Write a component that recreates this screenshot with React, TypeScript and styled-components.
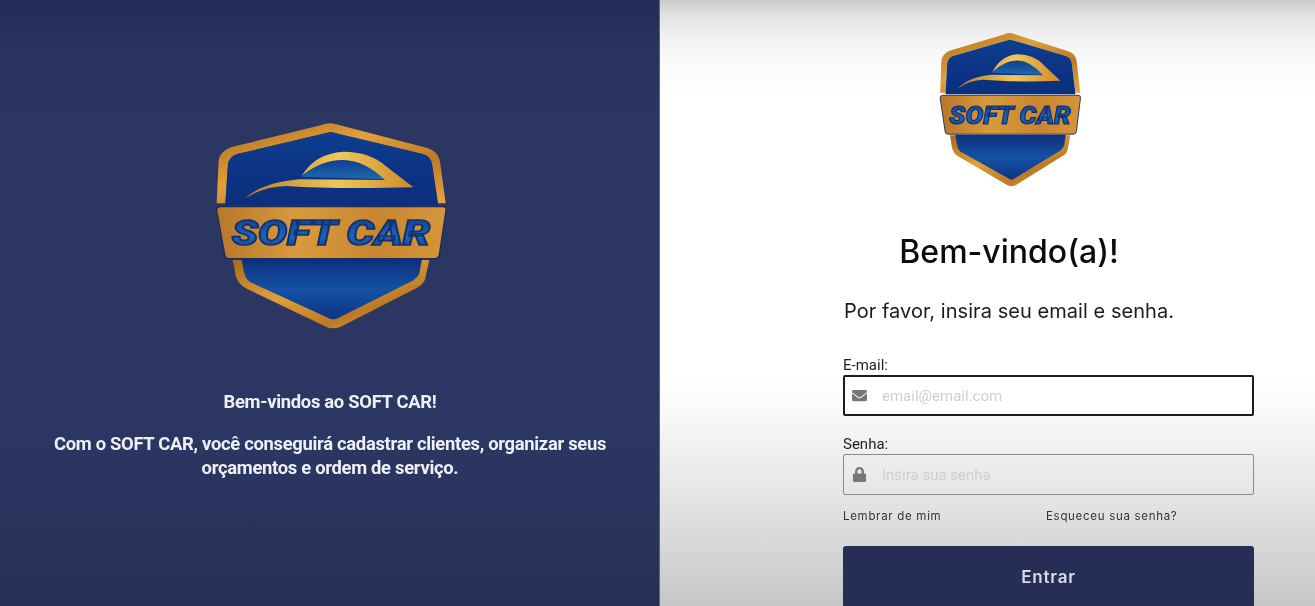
import { createGlobalStyle, styled } from "styled-components";
import { FaEnvelope, FaLock } from "react-icons/fa";

const GlobalStyle = createGlobalStyle`
    html, body {
        margin: 0;
        padding: 0;
        height: 100%;
        overflow: hidden;
        font-family: "Roboto", "Liberation Sans", sans-serif;
    }
    * {
        box-sizing: border-box;
    }
`;

function Logo({ width, height }: { width: number; height: number }) {
    const id = `logo-${width}`;
    return (
        <LogoSvg $w={width} $h={height} viewBox="0 0 780 690" preserveAspectRatio="none">
            <defs>
                <linearGradient id={`${id}-gold`} x1="0" y1="0" x2="1" y2="1">
                    <stop offset="0" stopColor="#a8691c" />
                    <stop offset="0.4" stopColor="#e0a03a" />
                    <stop offset="0.7" stopColor="#bd7a26" />
                    <stop offset="1" stopColor="#e6a844" />
                </linearGradient>
                <linearGradient id={`${id}-bar`} x1="0" y1="0" x2="1" y2="0">
                    <stop offset="0" stopColor="#b8762a" />
                    <stop offset="0.35" stopColor="#d99a3e" />
                    <stop offset="0.7" stopColor="#c98630" />
                    <stop offset="1" stopColor="#d6953a" />
                </linearGradient>
                <linearGradient id={`${id}-blue-top`} x1="0" y1="0" x2="0" y2="1">
                    <stop offset="0" stopColor="#0f3f8e" />
                    <stop offset="0.5" stopColor="#0c3486" />
                    <stop offset="1" stopColor="#0b2f7c" />
                </linearGradient>
                <linearGradient id={`${id}-blue-low`} x1="0" y1="0" x2="0" y2="1">
                    <stop offset="0" stopColor="#0c2f7c" />
                    <stop offset="0.5" stopColor="#1452a4" />
                    <stop offset="1" stopColor="#0d3484" />
                </linearGradient>
                <linearGradient id={`${id}-swoosh`} x1="0" y1="0" x2="1" y2="0">
                    <stop offset="0" stopColor="#b97c28" />
                    <stop offset="0.55" stopColor="#eec75a" />
                    <stop offset="1" stopColor="#cf8a2c" />
                </linearGradient>
                <linearGradient id={`${id}-glass`} x1="0" y1="0" x2="0" y2="1">
                    <stop offset="0" stopColor="#0e3f90" />
                    <stop offset="1" stopColor="#1f68b0" />
                </linearGradient>
                <linearGradient id={`${id}-type`} x1="0" y1="0" x2="0" y2="1">
                    <stop offset="0" stopColor="#0e3a8c" />
                    <stop offset="0.6" stopColor="#1a66ba" />
                    <stop offset="1" stopColor="#0d3480" />
                </linearGradient>
            </defs>
            <path
                d="M390 40 Q402 40 420 46 L682 114 Q714 124 720 154 L737 280 L714 280 L696 162 Q692 140 668 132 L392 66 L112 132 Q88 140 84 162 L76 280 L50 280 L56 150 Q60 126 92 112 L362 46 Q376 40 390 40 Z"
                fill={`url(#${id}-gold)`}
            />
            <path
                d="M392 66 L668 132 Q692 140 696 162 L714 286 L76 286 L84 162 Q88 140 112 132 Z"
                fill={`url(#${id}-blue-top)`}
            />
            <path
                d="M98 450 L108 500 Q114 522 140 536 L378 650 Q400 660 422 650 L650 534 Q672 522 676 505 L688 450 Z"
                fill={`url(#${id}-gold)`}
            />
            <path
                d="M124 448 L134 494 Q138 510 158 520 L390 626 Q400 630 410 626 L638 512 Q654 502 658 490 L666 448 Z"
                fill={`url(#${id}-blue-low)`}
            />
            <path d="M305 200 Q365 150 430 150 Q500 152 555 208 Z" fill={`url(#${id}-glass)`} />
            <path
                d="M135 265 Q190 216 300 208 L555 210 Q495 152 430 150 Q365 149 305 198 Q345 130 430 125 Q510 125 560 170 L640 232 Q400 238 260 228 Q190 230 135 265 Z"
                fill={`url(#${id}-swoosh)`}
            />
            <path
                d="M62 290 L728 290 Q740 290 738 302 L718 434 Q716 446 704 446 L86 446 Q76 446 74 434 L50 302 Q48 290 62 290 Z"
                fill={`url(#${id}-bar)`}
                stroke="#1d2a5c"
                strokeWidth="4"
            />
            <LogoType
                x="95"
                y="405"
                textLength="596"
                lengthAdjust="spacingAndGlyphs"
                fill={`url(#${id}-type)`}
            >
                SOFT CAR
            </LogoType>
        </LogoSvg>
    );
}

export default function App() {
    return (
        <>
            <GlobalStyle />
            <Page>
                <IntroPanel>
                    <Logo width={260} height={230} />
                    <IntroText>
                        <IntroLine>Bem-vindos ao SOFT CAR!</IntroLine>
                        <IntroLine>
                            Com o SOFT CAR, você conseguirá cadastrar clientes, organizar seus orçamentos e ordem de serviço.
                        </IntroLine>
                    </IntroText>
                </IntroPanel>
                <LoginPanel>
                    <Header>
                        <Logo width={159} height={172} />
                        <Title>Bem-vindo(a)!</Title>
                        <Subtitle>Por favor, insira seu email e senha.</Subtitle>
                    </Header>
                    <Form onSubmit={(e) => e.preventDefault()}>
                        <Field>
                            <Label htmlFor="email">E-mail:</Label>
                            <InputBox $focused>
                                <FaEnvelope />
                                <Input id="email" type="text" placeholder="email@email.com" />
                            </InputBox>
                        </Field>
                        <Field>
                            <Label htmlFor="senha">Senha:</Label>
                            <InputBox>
                                <FaLock />
                                <Input id="senha" type="password" placeholder="Insira sua senha" />
                            </InputBox>
                        </Field>
                        <OptionsRow>
                            <OptionText>Lembrar de mim</OptionText>
                            <OptionText>Esqueceu sua senha?</OptionText>
                        </OptionsRow>
                        <SubmitButton type="submit">Entrar</SubmitButton>
                    </Form>
                </LoginPanel>
            </Page>
        </>
    );
}

const Page = styled.div`
    display: flex;
    width: 100%;
    height: 606px;
    overflow: hidden;
`;

const IntroPanel = styled.section`
    width: 660px;
    flex-shrink: 0;
    display: flex;
    flex-direction: column;
    align-items: center;
    padding-top: 110px;
    padding-left: 1px;
    border-right: 1px solid #5c6684;
    background: linear-gradient(
        180deg,
        #222c55 0,
        #28335e 40px,
        #2b3762 120px,
        #2b3762 440px,
        #29345c 530px,
        #263056 606px
    );
`;

const LogoSvg = styled.svg<{ $w: number; $h: number }>`
    display: block;
    flex-shrink: 0;
    width: ${(p) => p.$w}px;
    height: ${(p) => p.$h}px;
    filter: blur(0.6px);
`;

const LogoType = styled.text`
    font-family: "Roboto", "Liberation Sans", sans-serif;
    font-size: 104px;
    font-weight: 900;
    font-style: italic;
    stroke: #14306f;
    stroke-width: 5px;
`;

const IntroText = styled.div`
    width: 580px;
    margin-top: 50px;
    display: flex;
    flex-direction: column;
    gap: 18px;
    text-align: center;
    color: #eef0f5;
    font-size: 18.4px;
    font-weight: 700;
    line-height: 24px;
    letter-spacing: -0.3px;
    filter: blur(0.5px);
`;

const IntroLine = styled.p`
    margin: 0;
`;

const LoginPanel = styled.section`
    flex: 1;
    display: flex;
    flex-direction: column;
    align-items: flex-start;
    padding: 23px 0 0 183px;
    background: linear-gradient(
        180deg,
        #cbcbcb 0,
        #e2e2e2 15px,
        #f0f0f0 35px,
        #fafafa 60px,
        #ffffff 100px,
        #ffffff 370px,
        #fcfcfc 400px,
        #f0f0f0 450px,
        #e4e4e4 500px,
        #d6d6d6 550px,
        #c6c6c6 606px
    );
`;

const Header = styled.div`
    width: 332px;
    display: flex;
    flex-direction: column;
    align-items: center;
    filter: blur(0.3px);
`;

const Title = styled.h1`
    margin: 37px 0 0;
    font-family: "Inter", sans-serif;
    font-size: 32px;
    font-weight: 500;
    line-height: 40px;
    color: #0c0c0c;
    white-space: nowrap;
`;

const Subtitle = styled.p`
    margin: 26px 0 1px;
    font-family: "Inter", sans-serif;
    font-size: 20px;
    font-weight: 400;
    line-height: 26px;
    letter-spacing: 0.05px;
    color: #1c1c1c;
    white-space: nowrap;
`;

const Form = styled.form`
    width: 411px;
    margin-top: 31px;
    display: flex;
    flex-direction: column;
    filter: blur(0.3px);
`;

const Field = styled.div`
    display: flex;
    flex-direction: column;
    & + & {
        margin-top: 19px;
    }
`;

const Label = styled.label`
    font-size: 15px;
    line-height: 19px;
    color: #222;
`;

const InputBox = styled.div<{ $focused?: boolean }>`
    height: 41px;
    display: flex;
    align-items: center;
    gap: 15px;
    padding: 0 ${(p) => (p.$focused ? 7 : 8)}px;
    border-radius: 2px;
    border: ${(p) => (p.$focused ? "2px solid #1c1c1c" : "1px solid #8a8a8a")};
    background: ${(p) => (p.$focused ? "#fff" : "transparent")};
    color: #777;
    svg {
        width: 15px;
        height: 15px;
        flex-shrink: 0;
    }
`;

const Input = styled.input`
    flex: 1;
    border: 0;
    outline: 0;
    padding: 0;
    background: transparent;
    font-family: "Roboto", sans-serif;
    font-size: 15px;
    color: #333;
    &::placeholder {
        color: #cfcfcf;
        opacity: 1;
    }
`;

const OptionsRow = styled.div`
    display: grid;
    grid-template-columns: 203px 1fr;
    margin-top: 13px;
    margin-bottom: 22px;
`;

const OptionText = styled.span`
    font-family: "Inter", sans-serif;
    font-size: 11.5px;
    line-height: 16px;
    letter-spacing: 0.7px;
    color: #333;
`;

const SubmitButton = styled.button`
    height: 62px;
    border: 0;
    border-radius: 3px;
    background: #262e55;
    color: #d8dbe4;
    font-family: "Inter", sans-serif;
    font-size: 17px;
    font-weight: 600;
    letter-spacing: 0.8px;
    padding: 0;
    cursor: pointer;
`;
